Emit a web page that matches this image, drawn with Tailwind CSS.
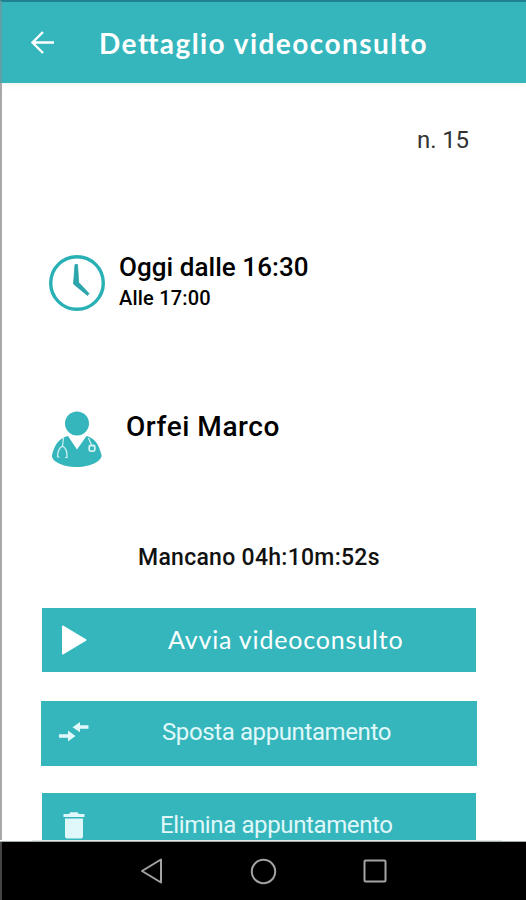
<!DOCTYPE html>
<html lang="it">
<head>
  <meta charset="UTF-8">
  <title>Dettaglio videoconsulto</title>
  <script src="https://cdn.jsdelivr.net/npm/@tailwindcss/browser@4"></script>
</head>
<body class="w-[526px] h-[900px] overflow-hidden bg-white font-['Roboto',sans-serif] text-[#111]">
  <div class="flex flex-col h-[900px] whitespace-nowrap">

    <header class="flex items-center h-[83px] shrink-0 bg-[#34b6bc] border-t-2 border-t-[#1f8092] border-l-2 border-l-[#5f9fa5] pl-[28px] shadow-[0_2px_6px_rgba(60,60,90,0.07)]">
      <svg class="w-[25px] h-[24px]" viewBox="0 0 25 24" fill="none" stroke="#fff" stroke-width="2.4">
        <path d="M24 11.500H2.500M13 1L2.500 11.500L13 22"/>
      </svg>
      <h1 class="ml-[44px] font-['Lato',sans-serif] font-bold text-[28px] leading-9 tracking-[1.45px] text-white">De<span class="tracking-[-0.5px]">t</span>taglio videoconsulto</h1>
    </header>

    <main class="flex flex-col h-[757px] shrink-0 overflow-hidden border-l-2 border-[#a9a9a9]">
      <p class="mt-[41px] mr-[57px] text-right text-[24px] leading-8 tracking-[-0.1px] text-[#333]">n. 15</p>

      <section class="flex mt-[95px] ml-[46px]">
        <svg class="w-[58px] h-[58px] mt-[3px]" viewBox="0 0 58 58">
          <circle cx="29" cy="29" r="26.300" fill="none" stroke="#29b0b4" stroke-width="3.400"/>
          <path d="M27 10.500h2.500l1.200 18L41 39.500l-1.500 2L25.500 30z" fill="#29a5ab" stroke="#29a5ab" stroke-width="0.800" stroke-linejoin="round"/>
        </svg>
        <div class="ml-[13px] font-medium text-black">
          <h2 class="text-[26px] leading-8 tracking-[0.05px]">Oggi dalle 16:30</h2>
          <p class="mt-px text-[20px] leading-[29px] tracking-[0.2px]">Alle 17:00</p>
        </div>
      </section>

      <section class="flex mt-[95px] ml-[49px]">
        <svg class="w-[52px] h-[60px] mt-px" viewBox="0 0 52 60">
          <circle cx="26" cy="14.500" r="12" fill="#34b6bc"/>
          <path d="M17 27L26 40.500L35.500 27C44 29 48 36 50.500 46C51.500 51 41 58 26 58C11 58 0 52 1 46C3.500 36 8 29 17 27z" fill="#34b6bc"/>
          <g fill="none" stroke="#d5f3f4" stroke-width="1.200">
            <path d="M12.500 29L11.500 37M11.500 37C8 39 6.500 42 6.500 48M11.500 37C15 39 16.500 42 16 48"/>
            <path d="M6 48h2.500M14 48.500h2.500"/>
            <path d="M37.500 29L40.500 36"/>
            <rect x="38.200" y="36.500" width="5.600" height="5.600" rx="1.500" stroke-width="1.800"/>
          </g>
        </svg>
        <h2 class="ml-[23px] mt-px font-medium text-[28px] leading-9 tracking-[0.55px] text-black">Orfei Marco</h2>
      </section>

      <p class="mt-[73px] ml-[136px] font-medium text-[23px] leading-8 tracking-[0.28px]">Mancano 04h:10m:52s</p>

      <div class="flex items-center shrink-0 w-[434px] h-[64px] mt-[34px] ml-[40px] bg-[#34b6bc] text-white">
        <svg class="w-[26px] h-[30px] ml-[19px]" viewBox="0 0 26 30">
          <path d="M2 1.500L24.500 15L2 28.500z" fill="#fff" stroke="#fff" stroke-width="2" stroke-linejoin="round"/>
        </svg>
        <span class="ml-[81px] font-['Lato',sans-serif] text-[25px] tracking-[0.82px]">Avvia videoconsulto</span>
      </div>

      <div class="flex items-center shrink-0 w-[436px] h-[65px] mt-[29px] ml-[39px] bg-[#34b6bc] text-[#e0f8fa]">
        <svg class="w-[30px] h-[20px] mb-[3px] ml-[18px]" viewBox="0 0 30 20" fill="#e0f8fa">
          <path d="M0 12.300h9V8.500l7.500 5.600L9 19.500V15.800H0zM29.500 3.300h-8.500V0L13.500 5.200L21 10.200V6.800h8.500z"/>
        </svg>
        <span class="mb-[4px] ml-[73px] text-[24px] tracking-[-0.39px]">Sposta appuntamento</span>
      </div>

      <div class="flex items-center shrink-0 w-[434px] h-[64px] mt-[27px] ml-[40px] bg-[#34b6bc] text-[#e0f8fa]">
        <svg class="w-[22px] h-[27px] ml-[21px]" viewBox="0 0 22 27" fill="#e0f8fa">
          <path d="M0.500 2h5.500L7.500 0.300h7L16 2h5.500v3H0.500zM2 6.500h18v18q0 2-2 2H4q-2 0-2-2z"/>
        </svg>
        <span class="ml-[75px] text-[24px] tracking-[-0.38px]">Elimina appuntamento</span>
      </div>
    </main>

    <div class="h-px shrink-0 bg-[#e4e8e8] mx-[32px] mr-[24px]"></div>
    <div class="h-px shrink-0 bg-[#a4abac]"></div>
    <nav class="flex items-center h-[58px] shrink-0 bg-black border-l-2 border-[#444] pl-[138px]">
      <svg class="w-[24px] h-[26px]" viewBox="0 0 24 26" fill="none" stroke="#a3a3a3" stroke-width="2" stroke-linejoin="round">
        <path d="M21 1.500V24.500L2 13z"/>
      </svg>
      <svg class="w-[27px] h-[27px] ml-[86px]" viewBox="0 0 27 27" fill="none" stroke="#a3a3a3" stroke-width="2">
        <circle cx="13.500" cy="13.500" r="11.700"/>
      </svg>
      <svg class="w-[24px] h-[24px] ml-[86px]" viewBox="0 0 24 24" fill="none" stroke="#a3a3a3" stroke-width="2">
        <rect x="1.500" y="1.500" width="21" height="21" rx="1"/>
      </svg>
    </nav>
  </div>
</body>
</html>
